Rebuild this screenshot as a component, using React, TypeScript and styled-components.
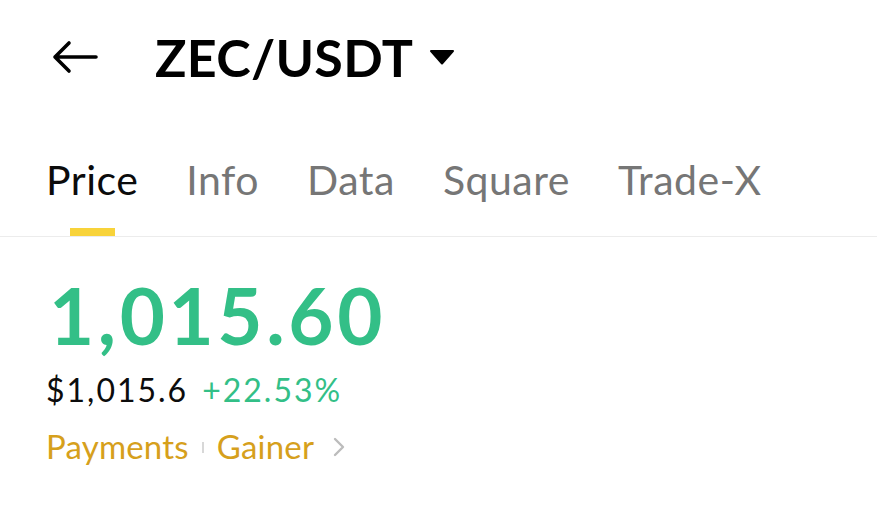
import styled, { createGlobalStyle } from 'styled-components'

const Global = createGlobalStyle`
  html, body { margin: 0; padding: 0; background: #fff; }
  body { font-family: Lato, "Open Sans", sans-serif; color: #000; }
`

const Page = styled.div`
  width: 877px;
  height: 519px;
  overflow: hidden;
  background: #fff;
`

const Header = styled.div`
  display: flex;
  align-items: center;
  height: 114px;
  padding: 0 0 4px 52px;
`

const Back = styled.svg`
  width: 46px;
  height: 34px;
  flex: none;
`

const Title = styled.div`
  display: flex;
  align-items: center;
  margin-left: 57px;
  font-size: 52px;
  font-weight: 700;
  line-height: 1;
  letter-spacing: 0.3px;
`

const Caret = styled.svg`
  width: 26px;
  height: 16px;
  margin-left: 16px;
`

const Tabs = styled.div`
  display: flex;
  gap: 48px;
  padding-left: 46px;
  border-bottom: 1px solid #ececec;
`

const Tab = styled.div<{ active?: boolean }>`
  position: relative;
  padding: 41px 0 36px;
  font-size: 41px;
  font-weight: 400;
  line-height: 1;
  letter-spacing: 0.5px;
  color: ${p => (p.active ? '#0b0b0b' : '#767676')};
  &::after {
    content: '';
    display: ${p => (p.active ? 'block' : 'none')};
    position: absolute;
    left: 50%;
    bottom: 0;
    width: 45px;
    height: 8px;
    margin-left: -22px;
    background: #f8d33a;
  }
`

const Quote = styled.div`
  padding: 39px 0 0 46px;
`

const Last = styled.div`
  font-size: 78px;
  font-weight: 700;
  line-height: 1;
  letter-spacing: 3.6px;
  color: #33bf87;
  margin-left: 3px;
`

const Sub = styled.div`
  display: flex;
  gap: 14px;
  margin-top: 20px;
  font-size: 32px;
  line-height: 1;
  letter-spacing: 2px;
`

const Fiat = styled.span`
  color: #0c0c0c;
`

const Change = styled.span`
  color: #33bf87;
`

const Tags = styled.div`
  display: flex;
  align-items: center;
  margin-top: 24px;
  font-size: 33px;
  line-height: 1;
  letter-spacing: 0.2px;
  color: #d6a01c;
`

const Sep = styled.span`
  width: 2px;
  height: 11px;
  margin: 2px 13px 0;
  background: #d8d8d8;
`

const Chevron = styled.svg`
  width: 14px;
  height: 20px;
  margin-left: 18px;
`

export default function App() {
  return (
    <Page>
      <Global />
      <Header>
        <Back viewBox="0 0 46 34">
          <path d="M44 17H3M17 3L3 17l14 14" fill="none" stroke="#000" strokeWidth="3.6" strokeLinecap="round" strokeLinejoin="round" />
        </Back>
        <Title>
          ZEC/USDT
          <Caret viewBox="0 0 26 16">
            <path d="M2 2h22L13 14.5z" fill="#000" stroke="#000" strokeWidth="2" strokeLinejoin="round" />
          </Caret>
        </Title>
      </Header>
      <Tabs>
        <Tab active>Price</Tab>
        <Tab>Info</Tab>
        <Tab>Data</Tab>
        <Tab>Square</Tab>
        <Tab>Trade-X</Tab>
      </Tabs>
      <Quote>
        <Last>1,015.60</Last>
        <Sub>
          <Fiat>$1,015.6</Fiat>
          <Change>+22.53%</Change>
        </Sub>
        <Tags>
          Payments
          <Sep />
          Gainer
          <Chevron viewBox="0 0 14 20">
            <path d="M3 2l8 8-8 8" fill="none" stroke="#bcbcbc" strokeWidth="2.4" strokeLinecap="round" strokeLinejoin="round" />
          </Chevron>
        </Tags>
      </Quote>
    </Page>
  )
}
